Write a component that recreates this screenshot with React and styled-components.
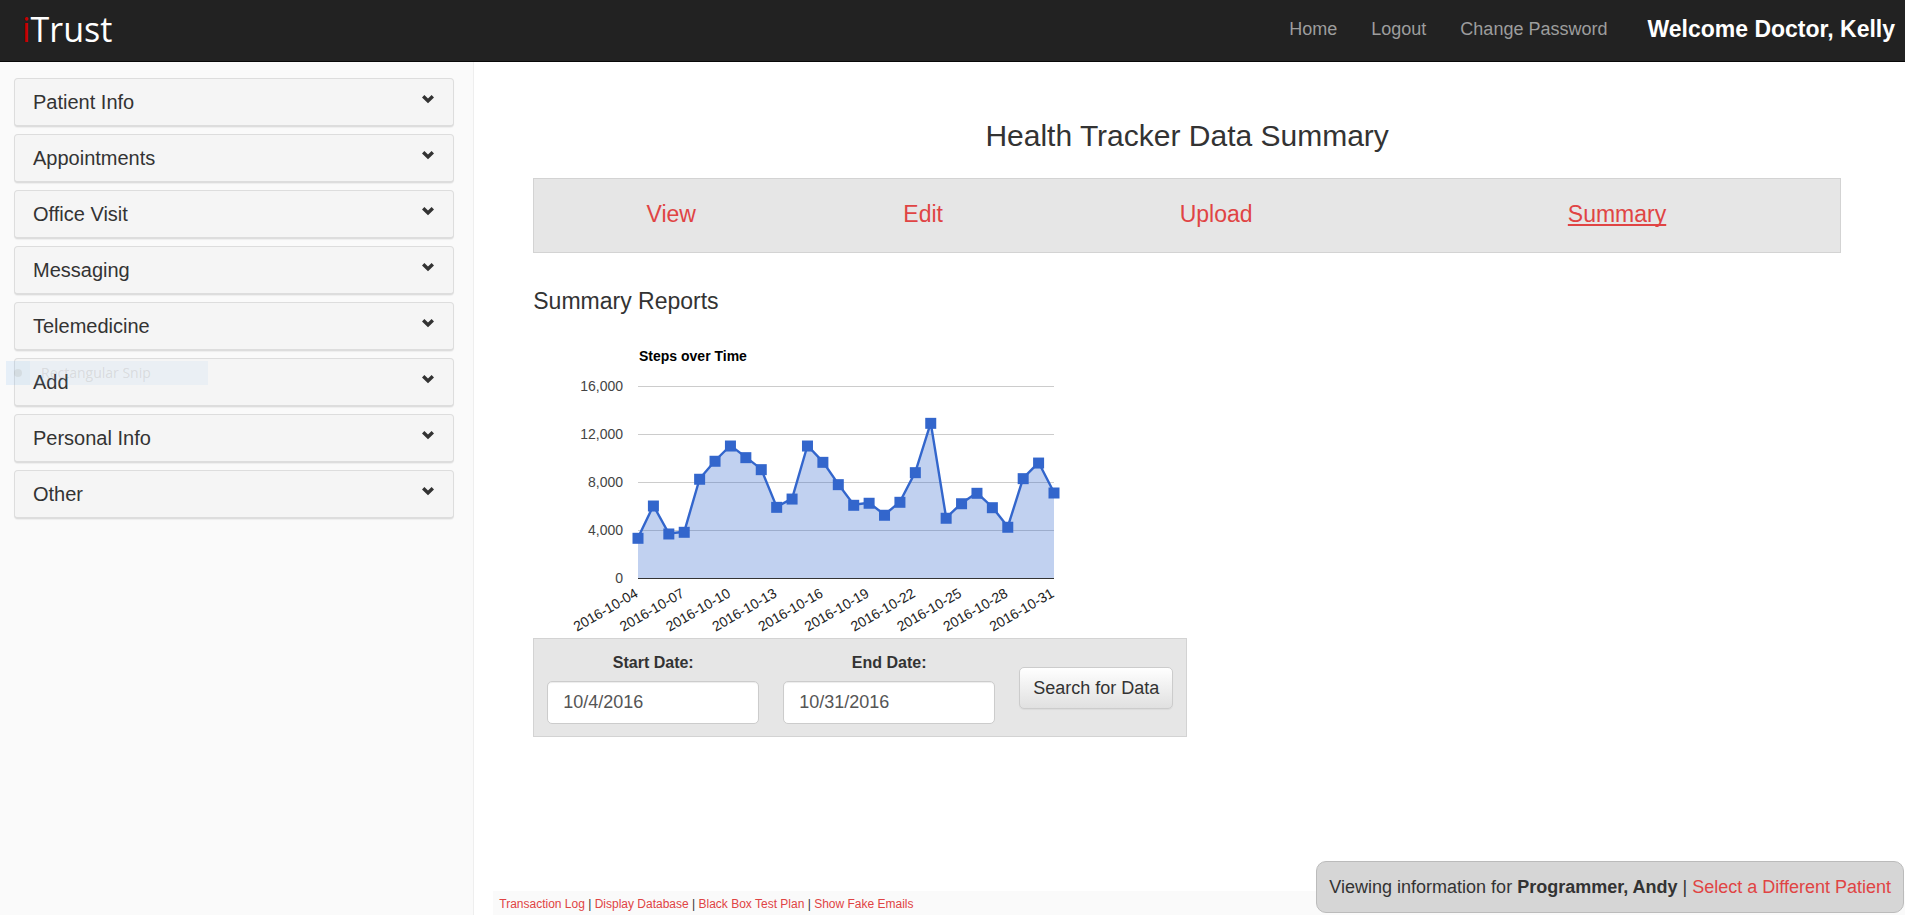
import React from 'react';
import styled, { createGlobalStyle } from 'styled-components';

const GlobalStyle = createGlobalStyle`
  *, *::before, *::after { box-sizing: border-box; }
  body {
    margin: 0;
    background: #fff;
    color: #333;
    font: 18px/26px "Liberation Sans", Arial, sans-serif;
  }
  a { color: #e04444; text-decoration: none; }
  h1, h2, ul { margin: 0; padding: 0; font-weight: 400; }
  ul { list-style: none; }
`;

const Page = styled.div`
  min-height: 100vh;
  display: flex;
  flex-direction: column;
`;

const TopBar = styled.header`
  display: flex;
  align-items: center;
  height: 62px;
  padding: 0 10px 4px 22px;
  background: #222;
  border-bottom: 1px solid #080808;
`;

const Logo = styled.a`
  margin-right: auto;
  color: #fff;
  font: 500 34px/48px "Open Sans", "Noto Sans", sans-serif;
`;

const LogoInitial = styled.span`
  color: #c80000;
`;

const TopNav = styled.nav`
  display: flex;
  gap: 34px;
  margin-right: 40px;
`;

const TopLink = styled.a`
  color: #9d9d9d;
`;

const Welcome = styled.strong`
  color: #fff;
  font-size: 23px;
`;

const Body = styled.div`
  flex: 1;
  display: flex;
`;

const Sidebar = styled.aside`
  flex: none;
  width: calc(25% - 2px);
  padding: 16px 19px 16px 14px;
  background: #fafafa;
  border-right: 1px solid #eee;
`;

const Menu = styled.ul`
  display: flex;
  flex-direction: column;
  gap: 7px;
`;

const MenuItem = styled.li`
  position: relative;
`;

const MenuButton = styled.button`
  display: flex;
  justify-content: space-between;
  width: 100%;
  height: 49px;
  padding: 10px 18px;
  border: 1px solid #ddd;
  border-bottom-width: 2px;
  border-radius: 4px;
  background: #f5f5f5;
  box-shadow: 0 1px 1px rgba(0, 0, 0, 0.05);
  color: #333;
  font: 20px/26px "Liberation Sans", Arial, sans-serif;
  text-align: left;
`;

const Chevron = styled.svg`
  width: 14px;
  height: 10px;
  margin-top: 5px;
`;

const Ghost = styled.div`
  position: absolute;
  top: 3px;
  left: -8px;
  display: flex;
  align-items: center;
  gap: 11px;
  width: 202px;
  height: 24px;
  background: rgba(120, 180, 240, 0.08);
  color: rgba(130, 120, 110, 0.18);
  font: 14px/24px "Open Sans", "Noto Sans", sans-serif;
  pointer-events: none;
`;

const GhostMark = styled.span`
  display: grid;
  place-items: center;
  width: 24px;
  height: 24px;
  background: rgba(120, 190, 240, 0.07);

  &::before {
    content: "";
    width: 8px;
    height: 8px;
    border-radius: 50%;
    background: rgba(130, 120, 110, 0.13);
  }
`;

const Content = styled.div`
  flex: 1;
  min-width: 0;
  display: flex;
  flex-direction: column;
`;

const Main = styled.main`
  flex: 1;
  padding: 56px 64px 40px 59px;
`;

const Title = styled.h1`
  margin-bottom: 24px;
  font-size: 30px;
  line-height: 36px;
  text-align: center;
`;

const Tabs = styled.nav`
  display: grid;
  grid-template-columns: 274fr 230fr 356fr 446fr;
  height: 75px;
  padding-top: 22px;
  background: #e6e6e6;
  border: 1px solid #d3d3d3;
  font-size: 23px;
  text-align: center;
`;

const Tab = styled.a`
  text-decoration: ${(p) => (p['aria-current'] ? 'underline' : 'none')};
  text-decoration-skip-ink: none;
`;

const SectionTitle = styled.h2`
  margin: 34px 0 25px;
  font-size: 23px;
  line-height: 28px;
`;

const Chart = styled.svg`
  display: block;
  width: 550px;
  height: 298px;
  font: 14px "Liberation Sans", Arial, sans-serif;
`;

const SearchForm = styled.form`
  display: flex;
  gap: 24px;
  width: 654px;
  height: 99px;
  padding: 12px 13px;
  background: #e6e6e6;
  border: 1px solid #d3d3d3;
`;

const Field = styled.label`
  flex: 1;
  display: flex;
  flex-direction: column;
  gap: 6px;
  font-size: 16px;
  font-weight: 700;
  line-height: 24px;
  text-align: center;
`;

const DateInput = styled.input`
  width: 100%;
  height: 43px;
  padding: 0 15px;
  border: 1px solid #ccc;
  border-radius: 5px;
  background: #fff;
  box-shadow: inset 0 1px 1px rgba(0, 0, 0, 0.075);
  color: #555;
  font: 18px/24px "Liberation Sans", Arial, sans-serif;
`;

const SearchButton = styled.button`
  flex: none;
  align-self: center;
  height: 42px;
  padding: 0 13px;
  border: 1px solid #ccc;
  border-radius: 5px;
  background: linear-gradient(#fff, #e0e0e0);
  box-shadow: 0 1px 1px rgba(0, 0, 0, 0.05);
  color: #333;
  font: 18px/24px "Liberation Sans", Arial, sans-serif;
`;

const Footer = styled.footer`
  margin-left: 19px;
  padding: 4px 6px 2px;
  background: #fafafa;
  font-size: 12px;
  line-height: 18px;
`;

const PatientBar = styled.div`
  position: fixed;
  right: 1px;
  bottom: 2px;
  padding: 12px;
  border: 1px solid #bbb;
  border-radius: 10px;
  background: #d6d6d6;
`;

const menu = [
  'Patient Info', 'Appointments', 'Office Visit', 'Messaging',
  'Telemedicine', 'Add', 'Personal Info', 'Other',
];
const topLinks = ['Home', 'Logout', 'Change Password'];
const tabs = ['View', 'Edit', 'Upload', 'Summary'];
const footerLinks = ['Transaction Log', 'Display Database', 'Black Box Test Plan', 'Show Fake Emails'];

const steps = [
  3350, 6040, 3710, 3850, 8270, 9770, 11040, 10070, 9070, 5930, 6620, 11040, 9680, 7820,
  6100, 6270, 5270, 6350, 8820, 12930, 5020, 6230, 7100, 5900, 4270, 8320, 9620, 7125,
];
const ticks = [0, 4000, 8000, 12000, 16000];
const plot = { left: 105, right: 521, top: 46, bottom: 238 };
const xAt = (i) => plot.left + (i * (plot.right - plot.left)) / (steps.length - 1);
const yAt = (v) => plot.bottom - (v / 16000) * (plot.bottom - plot.top);

function StepsChart() {
  const line = steps.map((v, i) => `${xAt(i)},${yAt(v)}`).join(' ');
  return (
    <Chart role="img" aria-label="Steps over Time" viewBox="0 0 550 298">
      <text x={plot.left + 1} y="21" fontWeight="700" fill="#000">Steps over Time</text>
      {ticks.map((t) => (
        <g key={t}>
          <rect x={plot.left} y={Math.round(yAt(t))} width={plot.right - plot.left} height="1" fill={t ? '#ccc' : '#333'} />
          <text x={plot.left - 15} y={Math.round(yAt(t)) + 5} textAnchor="end" fill="#444">
            {t.toLocaleString('en-US')}
          </text>
        </g>
      ))}
      <polygon
        points={`${plot.left},${plot.bottom} ${line} ${plot.right},${plot.bottom}`}
        fill="#3366cc"
        fillOpacity="0.3"
      />
      <polyline points={line} fill="none" stroke="#3366cc" strokeWidth="2.4" />
      {steps.map((v, i) => (
        <rect key={i} x={xAt(i) - 5.5} y={yAt(v) - 5} width="11" height="11" fill="#3366cc" />
      ))}
      {steps.map((_, i) => i % 3 === 0 && (
        <text
          key={i}
          transform={`translate(${xAt(i) + 1} 256) rotate(-30)`}
          textAnchor="end"
          fill="#222"
        >
          {`2016-10-${String(i + 4).padStart(2, '0')}`}
        </text>
      ))}
    </Chart>
  );
}

export default function App() {
  return (
    <Page>
      <GlobalStyle />
      <TopBar>
        <Logo href="#"><LogoInitial>i</LogoInitial>Trust</Logo>
        <TopNav>
          {topLinks.map((l) => <TopLink key={l} href="#">{l}</TopLink>)}
        </TopNav>
        <Welcome>Welcome Doctor, Kelly</Welcome>
      </TopBar>
      <Body>
        <Sidebar>
          <Menu>
            {menu.map((m) => (
              <MenuItem key={m}>
                <MenuButton type="button">
                  {m}
                  <Chevron viewBox="0 0 14 10" aria-hidden="true">
                    <path d="M3.4 1 7 4.5 10.6 1 13 3.4 7 9.2 1 3.4z" fill="#333" />
                  </Chevron>
                </MenuButton>
                {m === 'Add' && <Ghost><GhostMark />Rectangular Snip</Ghost>}
              </MenuItem>
            ))}
          </Menu>
        </Sidebar>
        <Content>
          <Main>
            <Title>Health Tracker Data Summary</Title>
            <Tabs>
              {tabs.map((t) => (
                <div key={t}>
                  <Tab href="#" aria-current={t === 'Summary' ? 'page' : undefined}>{t}</Tab>
                </div>
              ))}
            </Tabs>
            <SectionTitle>Summary Reports</SectionTitle>
            <StepsChart />
            <SearchForm onSubmit={(e) => e.preventDefault()}>
              <Field>
                Start Date:
                <DateInput type="text" defaultValue="10/4/2016" />
              </Field>
              <Field>
                End Date:
                <DateInput type="text" defaultValue="10/31/2016" />
              </Field>
              <SearchButton type="submit">Search for Data</SearchButton>
            </SearchForm>
          </Main>
          <Footer>
            {footerLinks.map((l, i) => (
              <React.Fragment key={l}>
                {i > 0 && ' | '}
                <a href="#">{l}</a>
              </React.Fragment>
            ))}
          </Footer>
        </Content>
      </Body>
      <PatientBar>
        Viewing information for <strong>Programmer, Andy</strong> | <a href="#">Select a Different Patient</a>
      </PatientBar>
    </Page>
  );
}
